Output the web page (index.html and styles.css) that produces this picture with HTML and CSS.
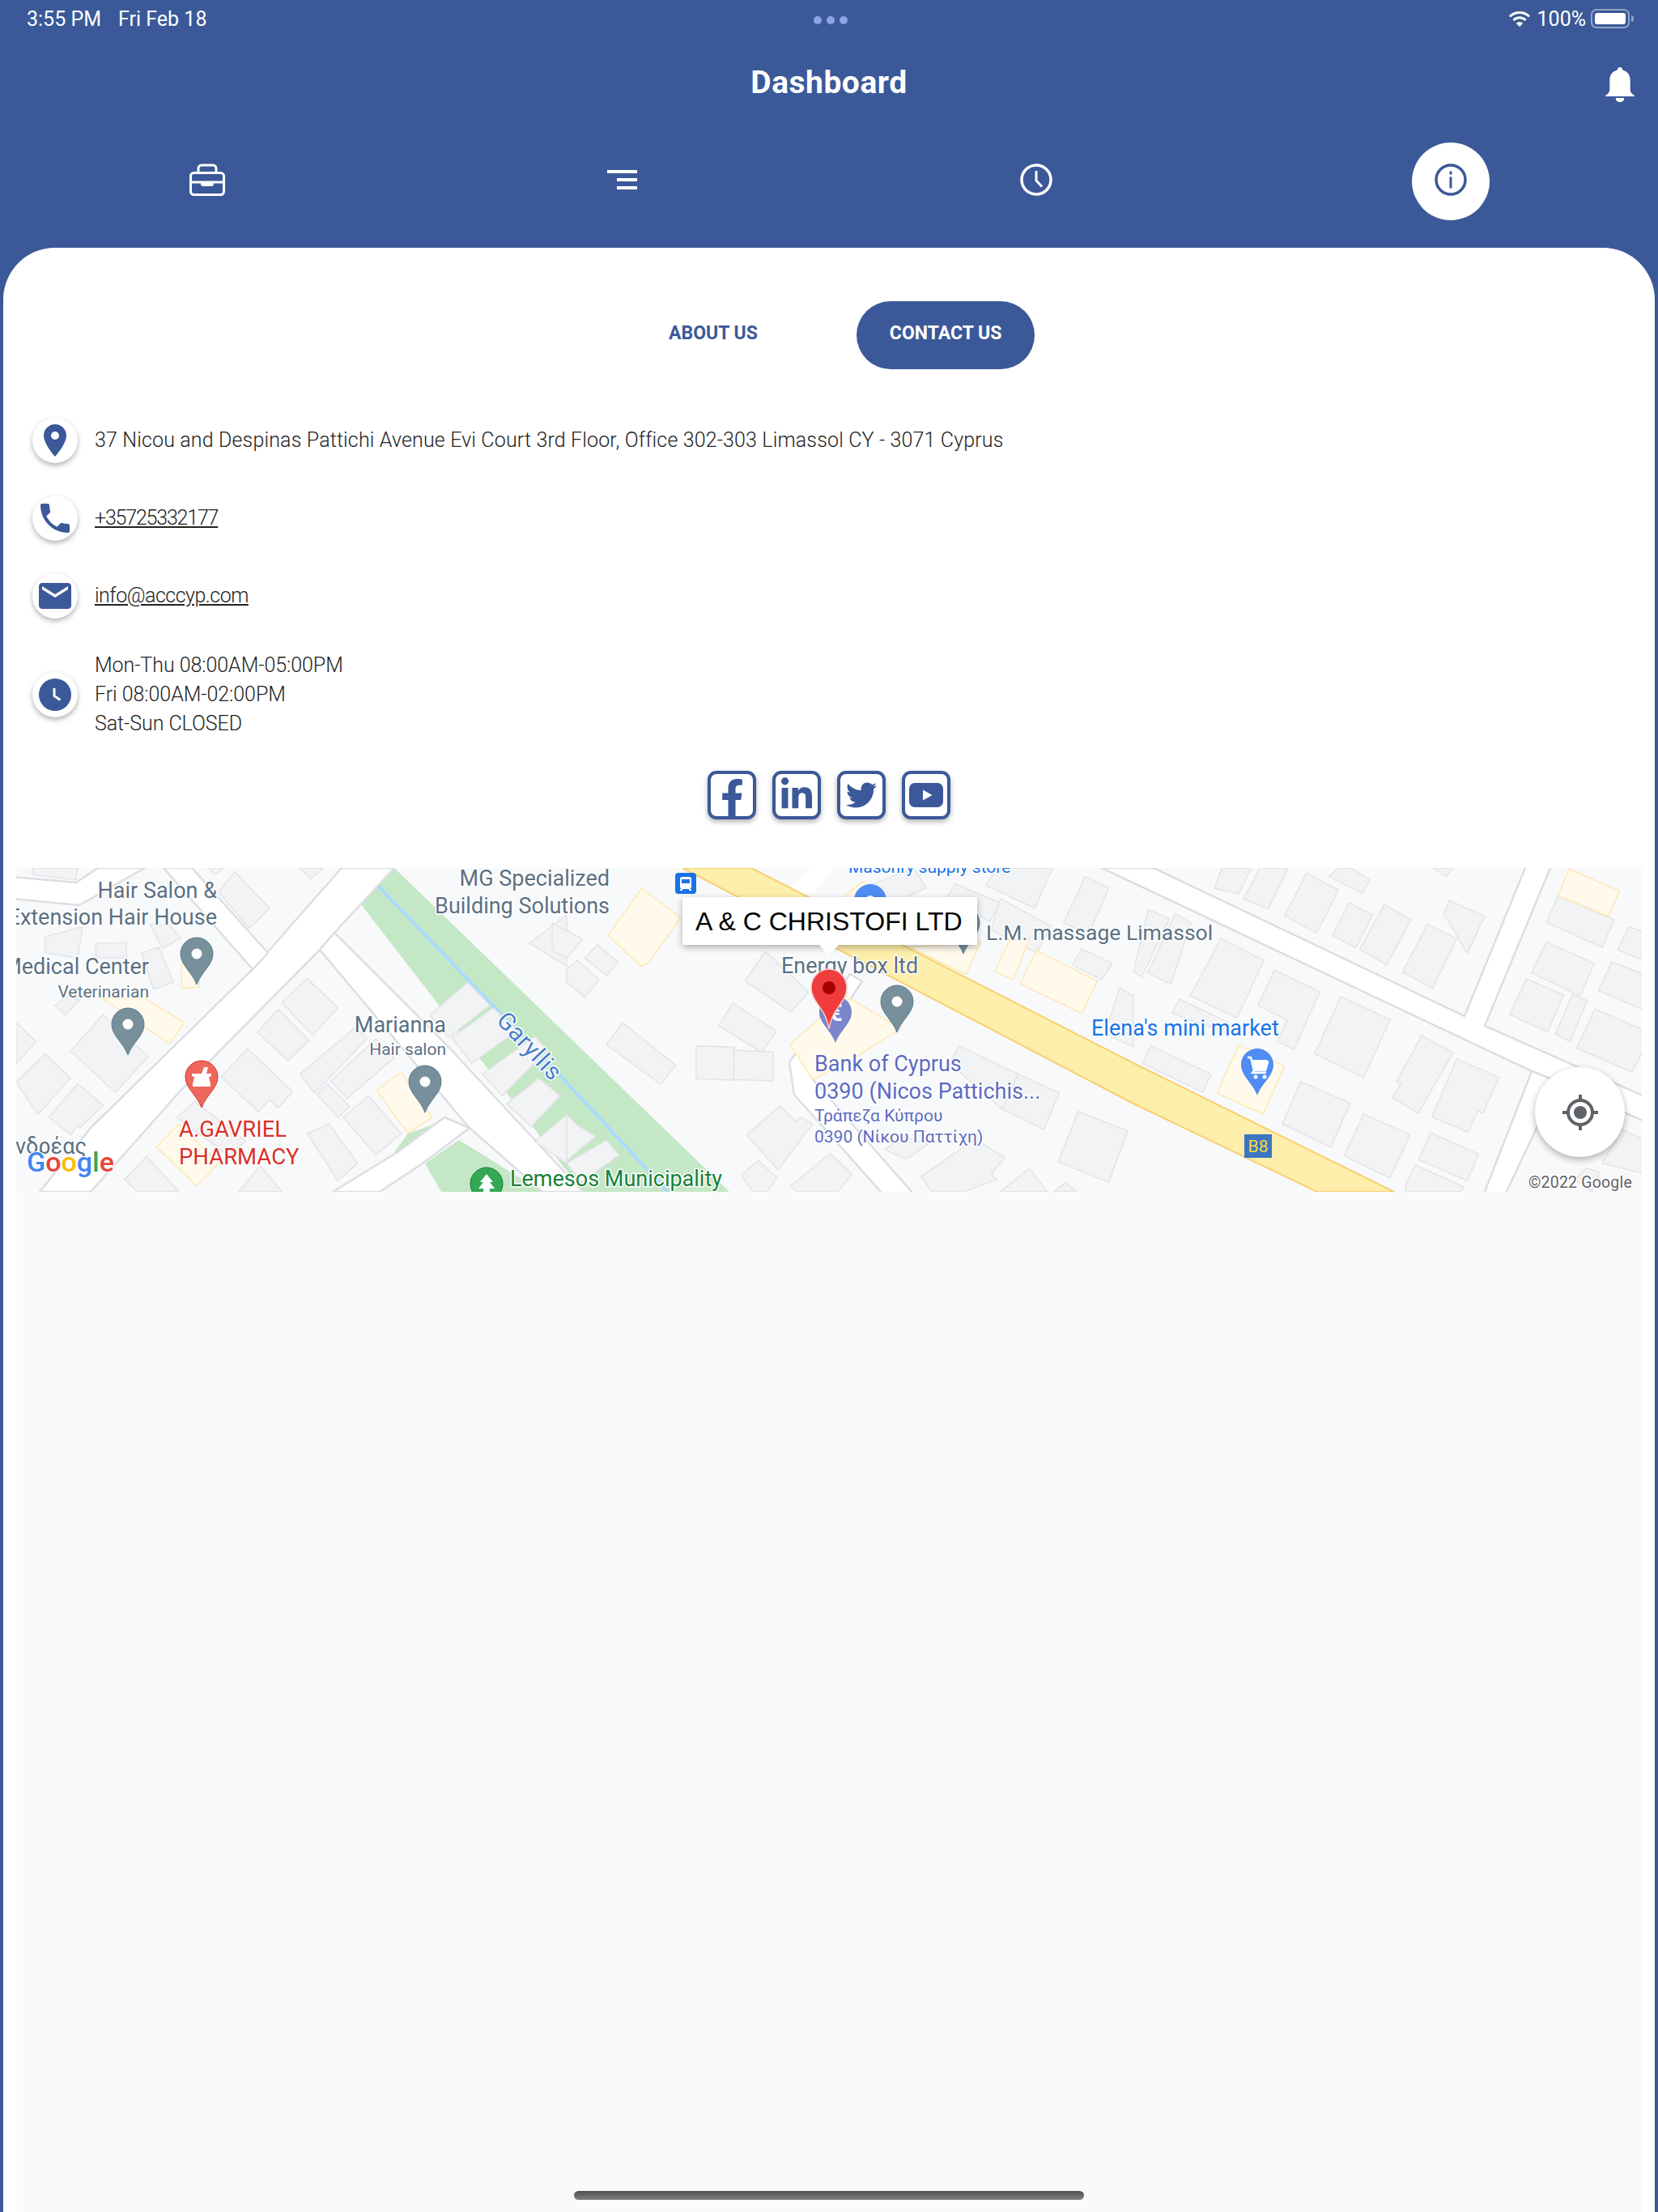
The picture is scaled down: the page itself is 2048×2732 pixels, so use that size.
FILE: index.html
```html
<!DOCTYPE html>
<html lang="en">
<head>
<meta charset="utf-8">
<title>Dashboard</title>
<link rel="stylesheet" href="styles.css">
</head>
<body>
<div class="app">
  <div class="status">
    <div class="status-time"><span>3:55 PM</span><span>Fri Feb 18</span></div>
    <div class="status-dots"><i></i><i></i><i></i></div>
    <div class="status-right">
      <svg class="wifi" viewBox="0 0 28 20"><path d="M2 7.500a17 17 0 0 1 24 0M6.500 12a10.500 10.500 0 0 1 15 0" fill="none" stroke="#fff" stroke-width="3"/><path d="M14 20l-4.200-4.200a6 6 0 0 1 8.400 0z" fill="#fff"/></svg>
      <span>100%</span>
      <div class="battery"><div class="battery-fill"></div></div>
      <div class="battery-nub"></div>
    </div>
  </div>

  <header class="header">
    <div></div>
    <h1 class="title">Dashboard</h1>
    <div class="bell-wrap">
      <svg class="bell" viewBox="0 0 34 43" preserveAspectRatio="none"><path d="M17 0c-2 0-3 1.500-3 3.500C8 5 5 10 5 16v12c0 2-1 4-3 5.500L0 35v1h34v-1l-2-1.500c-2-1.500-3-3.500-3-5.500V16c0-6-3-11-9-12.500C20 1.500 19 0 17 0zM12 38h10c0 3-2 5-5 5s-5-2-5-5z" fill="#fff"/></svg>
    </div>
  </header>

  <nav class="tabs">
    <div class="tab">
      <svg class="tab-ic" width="44" height="40" viewBox="0 0 44 40" fill="none" stroke="#fff" stroke-width="3"><rect x="1.500" y="11.500" width="41" height="27" rx="4"/><path d="M11 11V6a4 4 0 0 1 4-4h14a4 4 0 0 1 4 4v5M2 23h40"/><path d="M14 23h16v2a3 3 0 0 1-3 3H17a3 3 0 0 1-3-3z" fill="#fff" stroke="none"/></svg>
    </div>
    <div class="tab">
      <svg class="tab-ic" width="37" height="24" viewBox="0 0 37 24" fill="#fff"><rect width="37" height="4"/><rect x="12" y="10" width="25" height="4"/><rect x="12" y="20" width="25" height="4"/></svg>
    </div>
    <div class="tab">
      <svg class="tab-ic" width="40" height="40" viewBox="0 0 40 40" fill="none" stroke="#fff" stroke-width="3.500"><circle cx="20" cy="20" r="18"/><path d="M20 9v12l7 7.500" stroke-width="3"/></svg>
    </div>
    <div class="tab">
      <div class="tab-active">
        <svg class="tab-ic" width="40" height="40" viewBox="0 0 40 40" fill="none" stroke="#3b5998" stroke-width="3.500"><circle cx="20" cy="20" r="18"/><path d="M20 9.500v4M20 16.500v14" stroke-width="3"/></svg>
      </div>
    </div>
  </nav>

  <main class="card">
    <div class="pills">
      <div class="pill">ABOUT US</div>
      <div class="pill pill-on">CONTACT US</div>
    </div>

    <div class="rows">
      <div class="row">
        <div class="row-ic"><svg viewBox="0 0 24 24" width="48" height="48"><path class="ic" d="M12 2C8.130 2 5 5.130 5 9c0 5.250 7 13 7 13s7-7.750 7-13c0-3.870-3.130-7-7-7zm0 9.500a2.500 2.500 0 0 1 0-5 2.500 2.500 0 0 1 0 5z"/></svg></div>
        <div class="row-text">37 Nicou and Despinas Pattichi Avenue Evi Court 3rd Floor, Office 302-303 Limassol CY - 3071 Cyprus</div>
      </div>
      <div class="row">
        <div class="row-ic"><svg viewBox="0 0 24 24" width="48" height="48"><path class="ic" d="M6.620 10.790c1.440 2.830 3.760 5.140 6.590 6.590l2.200-2.200c.27-.27.67-.36 1.020-.24 1.120.37 2.330.57 3.570.57.55 0 1 .45 1 1V20c0 .55-.45 1-1 1-9.390 0-17-7.610-17-17 0-.55.45-1 1-1h3.500c.55 0 1 .45 1 1 0 1.250.2 2.450.57 3.570.11.35.03.74-.25 1.020l-2.200 2.200z"/></svg></div>
        <div class="row-text row-link row-tel">+35725332177</div>
      </div>
      <div class="row">
        <div class="row-ic"><svg viewBox="0 0 24 24" width="48" height="48"><path class="ic" d="M20 4H4c-1.100 0-1.990.9-1.990 2L2 18c0 1.100.9 2 2 2h16c1.100 0 2-.9 2-2V6c0-1.100-.9-2-2-2zm0 4l-8 5-8-5V6l8 5 8-5v2z"/></svg></div>
        <div class="row-text row-link row-mail">info@acccyp.com</div>
      </div>
      <div class="row">
        <div class="row-ic"><svg viewBox="0 0 24 24" width="48" height="48"><circle class="ic" cx="12" cy="12" r="10"/><path d="M11.500 8v4.700l3.700 2.500" fill="none" stroke="#fff" stroke-width="1.500"/></svg></div>
        <div class="row-text row-hours">Mon-Thu 08:00AM-05:00PM<br>Fri 08:00AM-02:00PM<br>Sat-Sun CLOSED</div>
      </div>
    </div>

    <div class="socials">
      <div class="social social-f"><svg width="29" height="46" viewBox="0 0 320 512"><path class="ic" d="M279.140 288l14.220-92.660h-88.910v-60.130c0-25.350 12.420-50.060 52.240-50.060h40.420V6.260S260.430 0 225.360 0c-73.220 0-121.080 44.380-121.080 124.720v70.620H22.890V288h81.390v224h100.170V288z"/></svg></div>
      <div class="social"><svg width="38" height="44" viewBox="0 0 448 512"><path class="ic" d="M100.280 448H7.400V148.900h92.880zM53.790 108.100C24.090 108.100 0 83.500 0 53.800a53.790 53.790 0 0 1 107.580 0c0 29.700-24.100 54.300-53.790 54.300zM447.900 448h-92.680V302.400c0-34.700-.7-79.200-48.290-79.200-48.290 0-55.690 37.700-55.690 76.700V448h-92.780V148.900h89.080v40.800h1.300c12.400-23.200 42.690-48.300 87.880-48.300 94 0 111.280 61.900 111.280 142.300V448z"/></svg></div>
      <div class="social"><svg width="38" height="38" viewBox="0 0 512 512"><path class="ic" d="M459.370 151.716c.325 4.548.325 9.097.325 13.645 0 138.720-105.583 298.558-298.558 298.558-59.452 0-114.680-17.219-161.137-47.106 8.447.974 16.568 1.299 25.340 1.299 49.055 0 94.213-16.568 130.274-44.832-46.132-.975-84.792-31.188-98.112-72.772 6.498.974 12.995 1.624 19.818 1.624 9.421 0 18.843-1.300 27.614-3.573-48.081-9.747-84.143-51.980-84.143-102.985v-1.299c13.969 7.797 30.214 12.670 47.431 13.319-28.264-18.843-46.781-51.005-46.781-87.391 0-19.492 5.197-37.360 14.294-52.954 51.655 63.675 129.300 105.258 216.365 109.807-1.624-7.797-2.599-15.918-2.599-24.040 0-57.828 46.782-104.934 104.934-104.934 30.213 0 57.502 12.670 76.670 33.137 23.715-4.548 46.456-13.320 66.599-25.340-7.798 24.366-24.366 44.833-46.132 57.827 21.117-2.273 41.584-8.122 60.426-16.243-14.292 20.791-32.161 39.308-52.628 54.253z"/></svg></div>
      <div class="social"><svg width="42" height="30" viewBox="0 0 42 30"><path class="ic" fill-rule="evenodd" d="M7 0h28a7 7 0 0 1 7 7v16a7 7 0 0 1-7 7H7a7 7 0 0 1-7-7V7a7 7 0 0 1 7-7zM17 8.500v13L28.500 15z"/></svg></div>
    </div>

    <section class="map">
      <svg class="map-svg" width="2008" height="400" viewBox="0 0 2008 400">
        <defs>
          <path id="pin" d="M20 0C9 0 0 9 0 20c0 14 14 22 20 38 6-16 20-24 20-38C40 9 31 0 20 0z"/>
        </defs>
        <rect class="m-bg" width="2008" height="400"/>
        <polygon class="m-park" points="467,0 881,400 700,400 426,45"/>
        <polygon class="m-park" points="505,365 547,336 650,400 525,400"/>
        <polygon class="m-park" points="467,351 484,328 518,316 470,352"/>
        <polyline class="m-river" points="446,21 680,265 805,400"/>

        <g class="m-roads">
          <polygon points="402,0 467,0 393,80 375,101 203,275 92,400 29,400 92,321 292,125"/>
          <polygon points="393,80 534,221 700,400 650,400 560,321 542,300 375,101"/>
          <polygon points="182,0 217,0 311,105 292,125"/>
          <polygon points="-5,11 74,18 101,0 159,0 78,46 -5,38"/>
          <polygon points="449,400 502,365 560,321 529,308 471,351 391,400"/>
          <polygon points="1030,131 955,240 961,280 1077,410 1115,410 984,261 975,245 1045,140"/>
          <polygon points="1341,0 1872,251 2020,317 2020,286 1814,195 1897,-5 1866,-5 1789,183 1405,0"/>
          <polygon points="1872,251 1810,410 1836,410 1905,264"/>
        </g>
        <polygon class="m-white" points="948,31 983,0 1010,0 985,31"/>
        <polygon class="m-road" points="823,0 908,0 1380,241 1702,400 1607,400 1380,291"/>

        <g transform="translate(-20,-12) scale(.4464,.3333)">
          <g class="m-b">
            <polygon points="650,50 745,185 690,260 605,125"/>
            <polygon points="780,535 850,445 935,555 865,655"/>
            <polygon points="712,645 770,560 855,675 797,750"/>
            <polygon points="612,810 685,705 810,865 770,925 745,895 715,940"/>
            <polygon points="830,800 985,625 1015,670 870,870"/>
            <polygon points="915,825 1040,670 1090,740 960,890"/>
            <polygon points="878,875 905,835 968,920 935,960"/>
            <polygon points="950,960 1020,880 1110,1020 1040,1100"/>
            <polygon points="850,1020 910,985 990,1130 935,1195"/>
            <polygon points="660,1235 720,1140 780,1235"/>
            <polygon points="345,1190 405,1105 495,1235 380,1235"/>
            <polygon points="195,715 285,580 410,735 320,868"/>
            <polygon points="45,830 125,725 195,815 105,950"/>
            <polygon points="135,960 215,835 285,915 220,1000 215,990 195,1025"/>
            <polygon points="45,610 100,680 45,760"/>
            <polygon points="152,545 190,510 220,525 180,580"/>
            <polygon points="490,960 540,900 680,1050 630,1100"/>
            <polygon points="1190,580 1295,460 1355,545 1240,665"/>
            <polygon points="1250,665 1365,555 1430,640 1305,760"/>
            <polygon points="1335,800 1480,660 1515,710 1390,880"/>
            <polygon points="1403,910 1490,815 1550,880 1470,995"/>
            <polygon points="1480,1050 1568,950 1568,1130"/>
            <polygon points="1465,315 1568,210 1568,400"/>
            <polygon points="90,36 215,36 210,80 90,60"/>
            <polygon points="575,36 620,36 595,60"/>
            <polygon points="830,36 895,36 860,75"/>
            <polygon points="125,290 228,255 215,370 125,350"/>
            <polygon points="265,315 350,313 350,370 265,370"/>
            <polygon points="392,350 440,330 480,460 425,485"/>
            <polygon points="415,245 470,250 500,295 450,335"/>
          </g>
          <g class="m-lot">
            <polygon points="285,520 400,520 510,608 470,688"/>
            <polygon points="502,390 550,390 552,480 503,480"/>
            <polygon points="1043,860 1110,792 1195,960 1128,1020"/>
            <polygon points="433,1070 495,985 605,1130 545,1215"/>
          </g>
        </g>

        <g transform="translate(680,-12) scale(.4464,.3333)">
          <g class="m-b">
            <polygon points="-40,240 45,300 0,370 -40,340"/>
            <polygon points="50,370 85,320 142,385 110,435"/>
            <polygon points="0,410 30,378 90,450 50,515 0,460"/>
            <polygon points="493,455 550,345 670,495 620,570"/>
            <polygon points="420,620 460,537 580,640 540,720"/>
            <polygon points="110,690 155,610 302,768 260,838"/>
            <polygon points="358,695 465,700 462,822 358,817"/>
            <polygon points="463,712 572,718 572,825 462,820"/>
            <polygon points="498,1025 590,918 635,975 650,960 680,985 585,1155"/>
            <polygon points="483,1175 530,1120 582,1185 555,1235 515,1235"/>
            <polygon points="620,1215 728,1095 790,1170 750,1235 635,1235"/>
            <polygon points="980,1180 1130,1040 1212,1110 1175,1170 1190,1190 1100,1235 1010,1235"/>
            <polygon points="880,1080 930,1030 1000,1060 940,1115"/>
            <polygon points="1060,760 1085,695 1250,800 1205,930"/>
            <polygon points="1205,930 1250,800 1363,870 1320,1005"/>
            <polygon points="1360,1125 1415,938 1552,1010 1500,1200"/>
            <polygon points="1200,1235 1280,1150 1330,1235"/>
            <polygon points="1350,1235 1380,1200 1410,1235"/>
            <polygon points="1400,395 1425,335 1510,390 1480,450"/>
            <polygon points="1055,140 1075,95 1200,165 1170,235"/>
            <polygon points="1160,100 1190,36 1345,36 1295,185"/>
            <polygon points="1375,240 1435,68 1500,110 1445,280"/>
            <polygon points="1175,265 1200,150 1340,250 1300,350"/>
            <polygon points="1530,480 1568,510 1568,700 1490,650"/>
            <polygon points="820,110 960,36 995,110 880,180"/>
            <polygon points="0,950 30,990 80,1030 0,1120"/>
            <polygon points="0,1130 110,1045 145,1100 40,1200"/>
          </g>
          <g class="m-lot">
            <polygon points="115,285 208,112 316,220 225,390 205,400 165,350"/>
            <polygon points="618,690 770,510 925,630 790,745 680,820"/>
            <polygon points="950,330 1145,310 1105,430"/>
            <polygon points="1185,420 1225,305 1280,300 1235,450"/>
            <polygon points="1255,465 1300,342 1468,455 1425,575"/>
            <polygon points="765,145 820,85 870,130 810,170"/>
          </g>
        </g>

        <g transform="translate(1380,-12) scale(.4132,.3333)">
          <g class="m-b">
            <polygon points="0,420 45,190 108,225 25,440"/>
            <polygon points="43,425 125,205 172,240 112,467"/>
            <polygon points="170,510 262,297 390,378 310,592"/>
            <polygon points="372,545 422,415 558,495 480,707 430,680 460,600"/>
            <polygon points="115,575 138,522 285,610 265,640"/>
            <polygon points="28,760 52,695 232,800 208,868"/>
            <polygon points="542,725 620,512 768,598 688,812"/>
            <polygon points="445,985 500,827 648,908 590,1070"/>
            <polygon points="630,1103 688,947 827,1025 767,1185"/>
            <polygon points="775,888 800,835 787,828 862,657 955,720 852,945"/>
            <polygon points="892,958 967,743 1093,812 1045,945 1030,935 1000,1015"/>
            <polygon points="853,1117 888,1017 1032,1097 998,1195"/>
            <polygon points="812,1215 843,1137 988,1218 980,1235 815,1235"/>
            <polygon points="452,213 518,55 613,118 548,277"/>
            <polygon points="595,285 645,165 715,210 665,332"/>
            <polygon points="677,338 750,172 830,228 757,395"/>
            <polygon points="805,422 878,245 967,297 895,482"/>
            <polygon points="928,205 945,157 1050,215 998,352"/>
            <polygon points="330,150 378,36 462,36 403,188"/>
            <polygon points="242,112 265,36 352,36 315,132"/>
            <polygon points="585,68 610,36 650,36 707,80 685,130"/>
            <polygon points="895,36 955,36 935,68"/>
            <polygon points="1235,238 1270,138 1437,228 1402,330"/>
            <polygon points="1447,340 1482,253 1530,275 1530,380"/>
            <polygon points="1190,425 1235,310 1378,390 1335,510"/>
            <polygon points="1125,578 1175,447 1286,507 1238,645"/>
            <polygon points="1262,650 1312,505 1357,528 1305,680"/>
            <polygon points="1325,703 1380,558 1530,640 1530,700 1490,792"/>
            <polygon points="1390,490 1430,385 1530,432 1530,565"/>
            <polygon points="1400,1130 1460,1005 1530,1045 1530,1170"/>
            <polygon points="1320,1190 1355,1148 1395,1165 1370,1235"/>
          </g>
          <g class="m-lot">
            <polygon points="1270,138 1303,40 1452,122 1420,215"/>
            <polygon points="250,870 315,692 452,770 388,948"/>
          </g>
        </g>

        <!-- place pins -->
        <use href="#pin" x="203" y="86" class="p-grey"/><circle cx="223" cy="106" r="6.500" class="p-hole"/>
        <use href="#pin" x="118" y="173" class="p-grey"/><circle cx="138" cy="193" r="6.500" class="p-hole"/>
        <use href="#pin" x="485" y="244" class="p-grey"/><circle cx="505" cy="264" r="6.500" class="p-hole"/>
        <use href="#pin" x="1068" y="145" class="p-grey"/><circle cx="1088" cy="165" r="6.500" class="p-hole"/>
        <use href="#pin" x="1150" y="48" class="p-grey"/>
        <use href="#pin" x="1035" y="20" class="p-blue"/><circle cx="1055" cy="40" r="6" class="p-hole"/>

        <use href="#pin" x="209" y="238" class="p-red"/>
        <path class="p-glyph" d="M217 254h12l3-8h5l-2 8h6v3l-3 1 2 9v3h-22v-3l2-9-3-1z"/>

        <use href="#pin" x="561" y="370" class="p-green"/>
        <path class="p-glyph" d="M581 378l8 10h-4l6 8h-6v6h-8v-6h-6l6-8h-4z"/>

        <use href="#pin" x="992" y="158" class="p-bank"/>
        <text x="1012" y="189" class="p-euro">€</text>

        <use href="#pin" x="1513" y="223" class="p-blue"/>
        <path d="M1521 234h4l4 16h14l3-10h-18M1529 250l-2 3h17" fill="none" stroke="#fff" stroke-width="2.500"/>
        <path class="p-glyph" d="M1527 237h19l-3 12h-13z"/>
        <circle cx="1531" cy="258" r="2.500" class="p-hole"/><circle cx="1542" cy="258" r="2.500" class="p-hole"/>

        <rect x="814" y="6" width="26" height="26" rx="4" fill="#1a73e8"/>
        <rect x="820" y="11" width="14" height="15" rx="3" fill="#fff"/>
        <rect x="822" y="14" width="10" height="5" fill="#1a73e8"/>
        <rect x="820" y="26" width="3" height="2" fill="#fff"/><rect x="831" y="26" width="3" height="2" fill="#fff"/>

        <rect x="1517" y="329" width="34" height="29" fill="#3a76c4"/>
        <text x="1534" y="351" class="t-shield">B8</text>

        <!-- labels -->
        <g class="t t-grey">
          <text x="248" y="37" class="t-end">Hair Salon &amp;</text>
          <text x="248" y="70" class="t-end">Extension Hair House</text>
          <text x="164" y="131" class="t-end">Medical Center</text>
          <text x="164" y="160" class="t-end t-sm">Veterinarian</text>
          <text x="733" y="22" class="t-end">MG Specialized</text>
          <text x="733" y="56" class="t-end">Building Solutions</text>
          <text x="531" y="203" class="t-end">Marianna</text>
          <text x="531" y="231" class="t-end t-sm">Hair salon</text>
          <text x="87" y="353" class="t-end">νδρέας</text>
          <text x="1198" y="89" class="t-lm">L.M. massage Limassol</text>
          <text x="945" y="130">Energy box ltd</text>
        </g>
        <text x="634" y="230" class="t t-water" transform="rotate(47 634 220)">Garyllis</text>
        <g class="t t-red">
          <text x="201" y="332">A.GAVRIEL</text>
          <text x="201" y="366">PHARMACY</text>
        </g>
        <text x="610" y="393" class="t t-green">Lemesos Municipality</text>
        <g class="t t-blue">
          <text x="1028" y="6" class="t-sm">Masonry supply store</text>
          <text x="1328" y="207">Elena's mini market</text>
        </g>
        <g class="t t-bank">
          <text x="986" y="251">Bank of Cyprus</text>
          <text x="986" y="285">0390 (Nicos Pattichis...</text>
          <text x="986" y="313" class="t-sm">Τράπεζα Κύπρου</text>
          <text x="986" y="339" class="t-sm">0390 (Νίκου Παττίχη)</text>
        </g>

        <!-- chosen marker -->
        <path class="p-marker" d="M1004 125c-12 0-22 10-22 23 0 18 19 26 22 51 3-25 22-33 22-51 0-13-10-23-22-23z"/>
        <circle cx="1004" cy="148" r="8" fill="#a30000"/>

        <text x="13" y="375" class="t-google"><tspan fill="#4285f4">G</tspan><tspan fill="#ea4335">o</tspan><tspan fill="#fbbc05">o</tspan><tspan fill="#4285f4">g</tspan><tspan fill="#34a853">l</tspan><tspan fill="#ea4335">e</tspan></text>
        <text x="1996" y="395" class="t-copy">©2022 Google</text>
      </svg>

      <div class="popup">A &amp; C CHRISTOFI LTD</div>
      <button class="locate" type="button" aria-label="My location">
        <svg width="44" height="44" viewBox="0 0 44 44" fill="none" stroke="#5f6368" stroke-width="4"><circle cx="22" cy="22" r="15"/><circle cx="22" cy="22" r="8" fill="#5f6368" stroke="none"/><path d="M22 0v7M22 37v7M0 22h7M37 22h7"/></svg>
      </button>
    </section>

    <div class="blank"></div>
  </main>
  <div class="home-bar"></div>
</div>
</body>
</html>
```

FILE: styles.css
```css
* { box-sizing: border-box; }
html, body { margin: 0; padding: 0; }
body {
  background: #3b5998;
  font-family: "Roboto", "Liberation Sans", sans-serif;
  color: #222;
}
.app {
  position: relative;
  width: 2048px;
  height: 2732px;
  display: flex;
  flex-direction: column;
  overflow: hidden;
}

/* status bar */
.status {
  height: 46px;
  display: grid;
  grid-template-columns: 1fr auto 1fr;
  align-items: center;
  padding: 0 30px 0 33px;
  color: #fff;
  font-size: 25px;
  font-weight: 400;
}
.status-time { display: flex; gap: 21px; }
.status-dots { display: flex; gap: 6px; }
.status-dots i {
  display: block;
  width: 10px;
  height: 10px;
  margin-top: 3px;
  border-radius: 50%;
  background: #8ba6e6;
}
.status-right {
  display: flex;
  align-items: center;
  justify-content: flex-end;
  gap: 6px;
}
.wifi { width: 28px; height: 20px; margin-right: 2px; }
.battery {
  width: 48px;
  height: 24px;
  padding: 3px;
  border: 2px solid rgba(255, 255, 255, .45);
  border-radius: 7px;
}
.battery-fill { width: 100%; height: 100%; background: #fff; border-radius: 3px; }
.battery-nub {
  width: 3px;
  height: 8px;
  margin-left: -4px;
  background: rgba(255, 255, 255, .45);
  border-radius: 0 3px 3px 0;
}

/* header */
.header {
  height: 130px;
  display: grid;
  grid-template-columns: 1fr auto 1fr;
  align-items: start;
}
.title {
  margin: 31px 0 0;
  color: #fff;
  font-size: 39px;
  line-height: 50px;
  font-weight: 700;
  letter-spacing: .5px;
}
.bell-wrap { display: flex; justify-content: flex-end; padding: 37px 29px 0 0; }
.bell { width: 36px; height: 43px; }

/* tabs */
.tabs {
  height: 96px;
  margin-bottom: 34px;
  display: grid;
  grid-template-columns: repeat(4, 1fr);
}
.tab { display: flex; align-items: center; justify-content: center; }
.tab-ic { margin-bottom: 4px; }
.tab-active {
  width: 96px;
  height: 96px;
  display: flex;
  align-items: center;
  justify-content: center;
  background: #fff;
  border-radius: 50%;
}

/* card */
.card {
  flex: 1;
  margin: 0 4px;
  display: flex;
  flex-direction: column;
  background: #fff;
  border-radius: 64px 64px 0 0;
}
.ic { fill: #3b5998; }

.pills {
  margin-top: 66px;
  margin-left: 781px;
  display: flex;
  gap: 81px;
}
.pill {
  height: 84px;
  padding: 0 41px 6px;
  display: flex;
  align-items: center;
  border-radius: 42px;
  color: #3b5998;
  font-size: 23px;
  font-weight: 700;
}
.pill-on { background: #3b5998; color: #fff; }

.rows {
  margin-top: 60px;
  padding-left: 36px;
  display: flex;
  flex-direction: column;
  gap: 40px;
}
.row { display: flex; align-items: center; gap: 21px; }
.row-ic {
  width: 56px;
  height: 56px;
  flex: none;
  display: flex;
  align-items: center;
  justify-content: center;
  border-radius: 50%;
  background: #fff;
  box-shadow: 0 3px 6px rgba(0, 0, 0, .3);
}
.row-text {
  font-size: 25px;
  font-weight: 300;
  line-height: 36px;
  color: #222;
  letter-spacing: .15px;
}
.row-link { text-decoration: underline; }
.row-tel { letter-spacing: -1.2px; }
.row-mail { letter-spacing: -.5px; }
.row-hours { letter-spacing: -.05px; }

.socials {
  margin-top: 40px;
  display: flex;
  justify-content: center;
  gap: 20px;
}
.social {
  width: 60px;
  height: 60px;
  display: flex;
  align-items: center;
  justify-content: center;
  background: #fff;
  border: 4px solid #3b5998;
  border-radius: 11px;
  box-shadow: 0 3px 6px rgba(0, 0, 0, .3);
}
.social-f { align-items: flex-end; }

/* map */
.map {
  position: relative;
  height: 400px;
  margin: 60px 16px 0;
  overflow: hidden;
}
.map-svg { display: block; }
.map-svg polygon, .map-svg polyline { vector-effect: non-scaling-stroke; }
.m-bg { fill: #f8f9fb; }
.m-park { fill: #c4e7c5; }
.m-river { fill: none; stroke: #aadaff; stroke-width: 4; }
.m-roads polygon { fill: #fff; stroke: #dcdee2; stroke-width: 2.500; stroke-linejoin: round; }
.m-white { fill: #fff; }
.m-road { fill: #feeeab; stroke: #f8cf70; stroke-width: 2; }
.m-b polygon { fill: #f2f3f5; stroke: #e3e4e7; stroke-width: 1.500; }
.m-lot polygon { fill: #fffaec; stroke: #fde9b2; stroke-width: 1.500; }

.p-grey { fill: #78909c; stroke: #607d8b; stroke-width: 1; }
.p-red { fill: #ee675c; stroke: #d93025; stroke-width: 1; }
.p-green { fill: #34a853; stroke: #188038; stroke-width: 1; }
.p-blue { fill: #4f8cf3; }
.p-bank { fill: #7986cb; }
.p-hole, .p-glyph { fill: #fff; }
.p-euro {
  fill: #fff;
  font-family: "Roboto", sans-serif;
  font-size: 30px;
  font-weight: 700;
  text-anchor: middle;
}
.p-marker { fill: #f03c3c; stroke: #f7c9c9; stroke-width: 1.500; }

.t {
  font-family: "Roboto", sans-serif;
  font-size: 27px;
  paint-order: stroke;
  stroke: #fff;
  stroke-width: 3px;
  stroke-linejoin: round;
}
.t-grey { fill: #5b7083; }
.t-water { fill: #4a7fc9; font-size: 30px; text-anchor: middle; letter-spacing: .5px; }
.t-red { fill: #d93025; font-size: 27.5px; }
.t-green { fill: #188038; }
.t-blue { fill: #1a73e8; }
.t-bank { fill: #5c6bc0; }
.t-end { text-anchor: end; }
.t-sm { font-size: 21px; }
.t-lm { font-size: 26.500px; }
.t-shield {
  fill: #fdd835;
  font-family: "Roboto", sans-serif;
  font-size: 21px;
  text-anchor: middle;
}
.t-google {
  font-family: "Roboto", sans-serif;
  font-size: 34px;
  font-weight: 500;
  paint-order: stroke;
  stroke: #fff;
  stroke-width: 2px;
}
.t-copy {
  fill: #5f6368;
  font-family: "Roboto", sans-serif;
  font-size: 19.500px;
  letter-spacing: .2px;
  text-anchor: end;
  paint-order: stroke;
  stroke: #fff;
  stroke-width: 3px;
}

.popup {
  position: absolute;
  left: 823px;
  top: 36px;
  width: 364px;
  height: 59px;
  padding: 12px 0 0 16px;
  background: #fff;
  color: #000;
  font-family: "Liberation Sans", sans-serif;
  font-size: 32px;
  line-height: 36px;
  box-shadow: 0 3px 8px rgba(0, 0, 0, .3);
}
.popup::after {
  content: "";
  position: absolute;
  left: 169px;
  top: 59px;
  border-left: 12px solid transparent;
  border-right: 12px solid transparent;
  border-top: 13px solid #fff;
}
.locate {
  position: absolute;
  left: 1876px;
  top: 246px;
  width: 111px;
  height: 111px;
  padding: 0;
  display: flex;
  align-items: center;
  justify-content: center;
  border: 0;
  border-radius: 50%;
  background: #fff;
  box-shadow: 0 3px 8px rgba(0, 0, 0, .3);
}

.blank {
  flex: 1;
  margin: 0 16px;
  background: #fafafa;
}
.home-bar {
  position: absolute;
  left: 709px;
  top: 2706px;
  width: 630px;
  height: 11px;
  border-radius: 6px;
  background: linear-gradient(165deg, transparent 99%, #aaa), linear-gradient(#4f4f4f, #808080);
}
```
